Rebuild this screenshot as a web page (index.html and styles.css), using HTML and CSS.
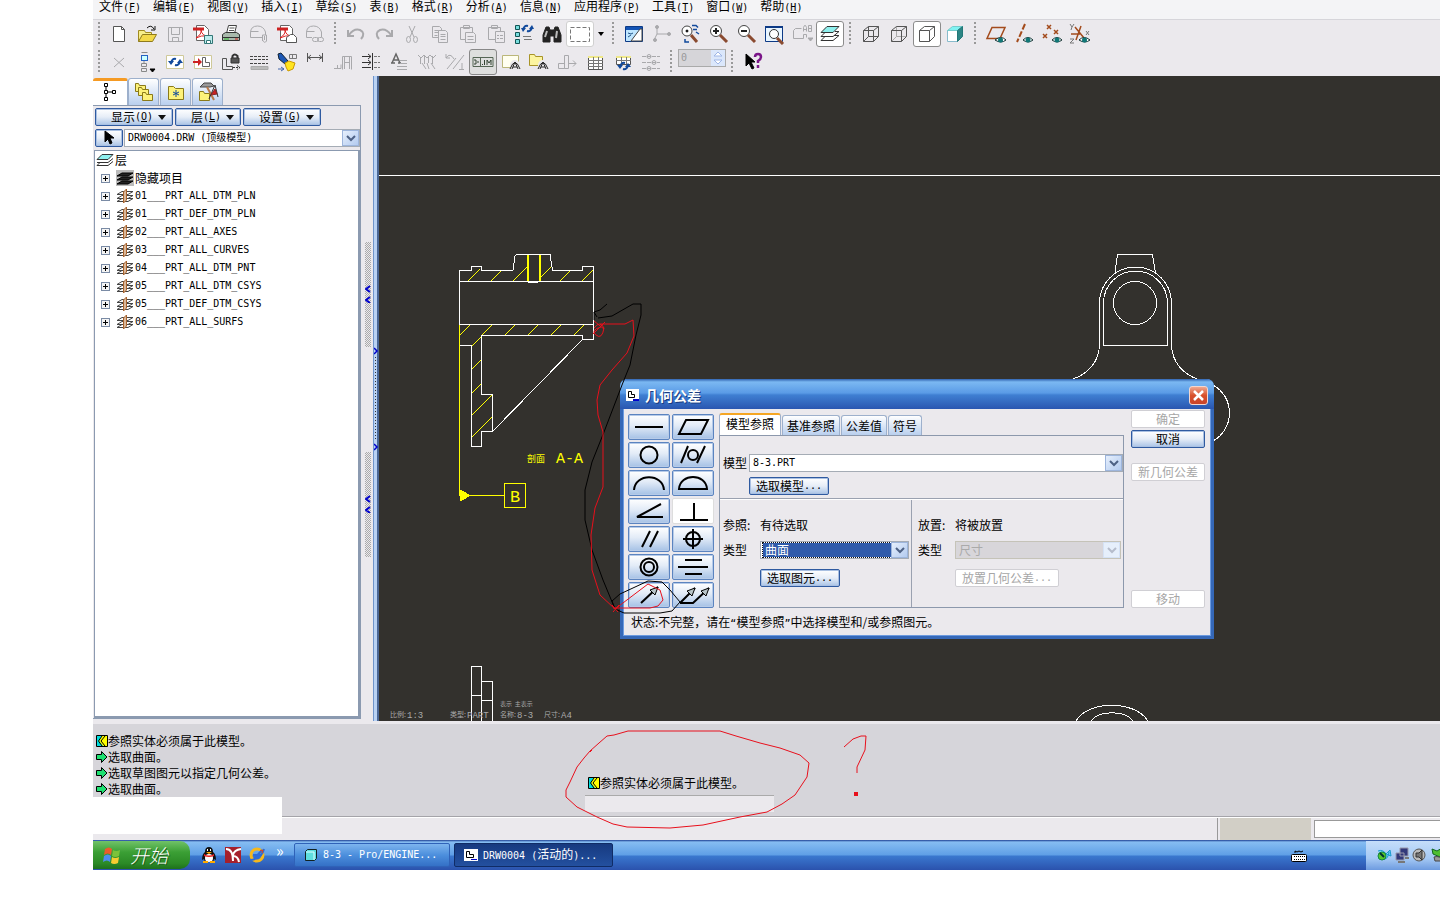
FILE: index.html
```html
<!DOCTYPE html>
<html lang="zh-CN">
<head>
<meta charset="utf-8">
<title>Pro/ENGINEER</title>
<link rel="stylesheet" href="styles.css">
</head>
<body>
<svg class="defs" aria-hidden="true">
<symbol id="layer" viewBox="0 0 18 16"><path d="M1 6.500l5-3h11l-5 3zM1 10.500l5-3h11l-5 3zM1 13.500l5-3h11l-5 3z" stroke="#444"/><path d="M7.500 15V4l3-3v11z" fill="#d8b79a" stroke="#a8622c"/></symbol>
<symbol id="chev" viewBox="0 0 10 8"><path d="M1 2l4 4 4-4" stroke-width="2"/></symbol>
<symbol id="warn" viewBox="0 0 12 12"><path d="M.5.500h11v11H.5z" fill="#ff0" stroke="#000"/><path d="M1 1h5L3 6l4 5H1z" fill="#0dd" stroke="none"/><path d="M9 1L5 6l4 5M6 1L2.500 6l3.500 5" stroke="#000"/></symbol>
<symbol id="go" viewBox="0 0 12 12"><path d="M.5 3.500h5v-3l5.500 5.500-5.500 5.500v-3h-5z" fill="#1ee070" stroke="#000"/></symbol>
</svg>
<div class="app">
<nav class="menubar">
<button>文件<span class="en">(<u>F</u>)</span></button><button>编辑<span class="en">(<u>E</u>)</span></button><button>视图<span class="en">(<u>V</u>)</span></button><button>插入<span class="en">(<u>I</u>)</span></button><button>草绘<span class="en">(<u>S</u>)</span></button><button>表<span class="en">(<u>B</u>)</span></button><button>格式<span class="en">(<u>R</u>)</span></button><button>分析<span class="en">(<u>A</u>)</span></button><button>信息<span class="en">(<u>N</u>)</span></button><button>应用程序<span class="en">(<u>P</u>)</span></button><button>工具<span class="en">(<u>T</u>)</span></button><button>窗口<span class="en">(<u>W</u>)</span></button><button>帮助<span class="en">(<u>H</u>)</span></button>
</nav>

<div class="toolbars">
<div class="toolbar">
<span class="sep first"></span>
<button class="tool" aria-label="新建"><svg viewBox="0 0 22 22"><path d="M5.500 3.500h8l3 3v12h-11z" fill="#fff" stroke="#555"/><path d="M13.500 3.500v3h3" stroke="#555"/></svg></button>
<button class="tool" aria-label="打开"><svg viewBox="0 0 22 22"><path d="M2.500 18.500v-11h6l1 2h6v2" fill="#f7ee8a" stroke="#a08a20"/><path d="M2.500 18.500l4-7h14l-4 7z" fill="#f3d94a" stroke="#8f7a1c"/><path d="M11 5q4-4 7 1m1-3v4h-4" stroke="#111"/></svg></button>
<button class="tool dim" aria-label="保存"><svg viewBox="0 0 22 22"><path d="M4.500 4.500h14v14h-14zM7.500 4.500v7h8v-7M8.500 18.500v-4h6v4"/></svg></button>
<button class="tool" aria-label="导出 PDF"><svg viewBox="0 0 22 22"><path d="M4.500 2.500h8l4 4v11h-12z" fill="#fff" stroke="#666"/><path d="M1 4.500h11v3H1z" fill="#c22" stroke="none"/><path d="M4 15q6-4 5-8q1 6 7 6q-7-1-12 2" stroke="#d22"/><path d="M12.500 12.500h8v8h-8z" fill="#bdecec" stroke="#377"/><path d="M14.500 17.500h4v3h-4z" fill="#fff" stroke="#377"/></svg></button>
<button class="tool" aria-label="打印"><svg viewBox="0 0 22 22"><path d="M6.500 10.500l2-8h8l-2 8" fill="#fff" stroke="#444"/><path d="M9.500 5h5M9 7.500h5" stroke="#555"/><path d="M2.500 11.500l3-2h11l3 2v6h-17z" fill="#a9b9ac" stroke="#333"/><path d="M3 14.500h16" stroke="#333"/><path d="M4 16h5" stroke="#3b3"/><path d="M15 16h3" stroke="#d22"/></svg></button>
<button class="tool dim" aria-label="发送"><svg viewBox="0 0 22 22"><path d="M14 14.500H2.500V10q0-7 7-7q6 0 8 6v3M2.500 8.500h8"/><path d="M14.500 18v-6h4v6q-2 3-4-1M16.500 13v4"/></svg></button>
<button class="tool" aria-label="邮寄 PDF"><svg viewBox="0 0 22 22"><path d="M4.500 2.500h9l3 3v12h-12z" fill="#fff" stroke="#666"/><path d="M1 4.500h11v3H1z" fill="#c22" stroke="none"/><path d="M4 15q6-4 5-8q1 6 7 6q-7-1-12 2" stroke="#d22"/><path d="M10.500 14.500l4-3h3l3 3v5h-10z" fill="#fff" stroke="#555"/></svg></button>
<button class="tool dim" aria-label="链接"><svg viewBox="0 0 22 22"><path d="M8 14.500H2.500V10q0-7 7-7q6 0 8 6v5M2.500 8.500h8"/><rect x="8.500" y="14.500" width="6" height="4" rx="2"/><rect x="13.500" y="14.500" width="6" height="4" rx="2"/></svg></button>
<span class="sep"></span>
<button class="tool dim" aria-label="撤销"><svg viewBox="0 0 22 22"><path d="M3 7v6h6M4 12q5-7 11-5q6 3 1 9" stroke-width="2"/></svg></button>
<button class="tool dim" aria-label="重做"><svg viewBox="0 0 22 22"><path d="M19 7v6h-6M18 12q-5-7-11-5q-6 3-1 9" stroke-width="2"/></svg></button>
<button class="tool dim" aria-label="剪切"><svg viewBox="0 0 22 22"><path d="M8 3l5 11M14 3L9 14"/><ellipse cx="7.500" cy="16.500" rx="2" ry="3"/><ellipse cx="14.500" cy="16.500" rx="2" ry="3"/></svg></button>
<button class="tool dim" aria-label="复制"><svg viewBox="0 0 22 22"><path d="M3.500 3.500h7l2 2v9h-9zM5.500 7.500h5M5.500 9.500h5M5.500 12.500h3"/><path d="M9.500 7.500h7l2 2v10h-9z" fill="#ebe9ed"/><path d="M11.500 11.500h5M11.500 13.500h5M11.500 16.500h5"/></svg></button>
<button class="tool dim" aria-label="粘贴"><svg viewBox="0 0 22 22"><path d="M3.500 4.500h12v12h-12zM6.500 2.500h6v3h-6z"/><path d="M8.500 9.500h8l2 2v8h-10z" fill="#ebe9ed"/><path d="M10.500 13.500h6M10.500 16.500h6"/></svg></button>
<button class="tool dim" aria-label="选择性粘贴"><svg viewBox="0 0 22 22"><path d="M3.500 4.500h12v12h-12zM6.500 2.500h6v3h-6z"/><path d="M10.500 8.500h9v11h-9z" fill="#ebe9ed"/><path d="M12 12.500h2m1 0h3M12 15.500h2m1 0h3"/></svg></button>
<button class="tool" aria-label="再生管理器"><svg viewBox="0 0 22 22"><path d="M2.500 2.500h4v4h-4zM2.500 9.500h4v4h-4zM2.500 16.500h4v4h-4z" fill="#7dd" stroke="#155"/><path d="M10 7q1-5 5-4M19 4q-1 5-5 4" stroke="#124a9c" stroke-width="2"/><path d="M8 5h5l-3 4zM21 6h-5l3-4z" fill="#124a9c" stroke="none"/><path d="M10 13.500h8M11 16.500h8" stroke="#777"/></svg></button>
<button class="tool" aria-label="查找"><svg viewBox="0 0 22 22"><path d="M5 4h3l1 3h4l1-3h3l3 8v7h-7v-6H9v6H2v-7z" fill="#222" stroke="#222"/><path d="M6 8l-2 6M16 8l-1 7" stroke="#bbb" stroke-width="2"/></svg></button>
<button class="tool framed" aria-label="选取框"><svg viewBox="0 0 22 22"><rect x="1.500" y="4.500" width="19" height="14" stroke="#777" stroke-dasharray="4 2"/></svg></button>
<button class="drop" aria-label="更多选项"><i></i></button>
<span class="sep"></span>
<button class="tool" aria-label="重画"><svg viewBox="0 0 22 22"><path d="M2.500 3.500h17v15h-17z" fill="#bfe6ff" stroke="#0d3a86"/><path d="M3 4h16v3H3z" fill="#1353b5" stroke="none"/><path d="M5 10l3 1 2-1M5 14l3-2" stroke="#258"/><path d="M17 6L8 18h11V6z" fill="#fff" stroke="#444"/></svg></button>
<button class="tool dim" aria-label="旋转中心"><svg viewBox="0 0 22 22"><path d="M6 4v7h12M6 11l-3 6"/><g fill="currentColor"><circle cx="6" cy="4" r="1.500"/><circle cx="18" cy="11" r="1.500"/><circle cx="4" cy="17" r="1.500"/></g></svg></button>
<button class="tool" aria-label="定向模式"><svg viewBox="0 0 22 22"><circle cx="8" cy="8" r="5" fill="#fff" stroke="#444"/><path d="M12 12l6 7" stroke="#8a4a30" stroke-width="3"/><circle cx="8" cy="8" r="1" fill="#333"/><path d="M13 2.500h4l2 2M14 6.500h4M6 16v3h4M17 9l3 2" stroke="#124a9c" stroke-width="1.500"/></svg></button>
<button class="tool" aria-label="放大"><svg viewBox="0 0 22 22"><circle cx="9" cy="8" r="5.500" fill="#fff" stroke="#444"/><path d="M13 12l7 7" stroke="#8a4a30" stroke-width="3"/><path d="M9 5v6M6 8h6" stroke="#222" stroke-width="2"/></svg></button>
<button class="tool" aria-label="缩小"><svg viewBox="0 0 22 22"><circle cx="9" cy="8" r="5.500" fill="#fff" stroke="#444"/><path d="M13 12l7 7" stroke="#8a4a30" stroke-width="3"/><path d="M6 8h6" stroke="#222" stroke-width="2"/></svg></button>
<button class="tool" aria-label="重新调整"><svg viewBox="0 0 22 22"><path d="M2.500 3.500h17v15h-17z" fill="#e8f5ff" stroke="#0d3a86"/><path d="M2 3h18v2H2z" fill="#0d3a86" stroke="none"/><circle cx="11" cy="11" r="4.500" fill="#fff" stroke="#333"/><path d="M14 15l6 6" stroke="#8a4a30" stroke-width="3"/></svg></button>
<button class="tool dim" aria-label="已保存视图"><svg viewBox="0 0 22 22"><path d="M2.500 15.500v-8l2-2h6M2.500 15.500h10v-4h3v3M12.500 8.500v-4l1-2h1l1 2v4m-3-2h3M17.500 2.500h3v6h-3zm0 3h3"/><path d="M17 15h5l-2.500 3z" fill="currentColor"/></svg></button>
<button class="tool framed on" aria-label="层"><svg viewBox="0 0 22 22"><path d="M2 17.500h12l6-5h-5M2 17.500l4-4M2 13.500h12l6-5h-4M2 13.500l4-4" stroke="#333"/><path d="M2 9.500l6-6h12l-6 6z" fill="#8ff0ee" stroke="#333"/></svg></button>
<span class="sep"></span>
<button class="tool" aria-label="线框"><svg viewBox="0 0 22 22"><path d="M3.500 7.500h10v11h-10zM8.500 3.500h10v10h-10zM3.500 7.500l5-4M13.500 7.500l5-4M13.500 18.500l5-5M3.500 18.500l5-5" stroke="#555"/></svg></button>
<button class="tool" aria-label="隐藏线"><svg viewBox="0 0 22 22"><path d="M8.500 3.500v10h10M3.500 18.500l5-5" stroke="#aaa"/><path d="M3.500 7.500h10v11h-10zM3.500 7.500l5-4h10v10l-5 5M13.500 7.500l5-4" stroke="#555"/></svg></button>
<button class="tool framed on" aria-label="无隐藏线"><svg viewBox="0 0 22 22"><path d="M3.500 7.500h10v11h-10zM3.500 7.500l5-4h10v10l-5 5M13.500 7.500l5-4" stroke="#555"/></svg></button>
<button class="tool" aria-label="着色"><svg viewBox="0 0 22 22"><path d="M3.500 7.500h10v11h-10z" fill="#fff" stroke="#8bc"/><path d="M3.500 7.500l5-4h10l-5 4z" fill="#7ff2f2" stroke="#7cc"/><path d="M13.500 7.500l5-4v10l-5 5z" fill="#2c8585" stroke="#277"/></svg></button>
<span class="sep"></span>
<button class="tool" aria-label="基准平面"><svg viewBox="0 0 22 22"><path d="M7 4.500h13l-5 11H2z" stroke="#a34b1c" stroke-width="1.500"/><path d="M10 17q6-5 11 0q-5 4-11 0z" fill="#fff" stroke="#133"/><circle cx="15.500" cy="17" r="2.500" fill="#177" stroke="none"/></svg></button>
<button class="tool" aria-label="基准轴"><svg viewBox="0 0 22 22"><path d="M12 1L4 19" stroke="#a34b1c" stroke-width="2" stroke-dasharray="6 2"/><path d="M10 17q5-5 10 0q-5 4-10 0z" fill="#fff" stroke="#133"/><circle cx="15" cy="17" r="2.500" fill="#177" stroke="none"/></svg></button>
<button class="tool" aria-label="基准点"><svg viewBox="0 0 22 22"><path d="M6 2l4 4m0-4L6 6M2 11l4 4m0-4l-4 4M13 7l4 4m0-4l-4 4" stroke="#a34b1c" stroke-width="1.500"/><path d="M11 17q5-5 10 0q-5 4-10 0z" fill="#fff" stroke="#133"/><circle cx="16" cy="17" r="2.500" fill="#177" stroke="none"/></svg></button>
<button class="tool" aria-label="坐标系"><svg viewBox="0 0 22 22"><path d="M2 11h9M12 3L7 17M6 4l9 11" stroke="#a34b1c" stroke-width="1.500"/><path d="M1 1l2 3 2-3M3 4l-1 3M1 16h4l-4 4h4M17 8l3 4m0-4l-3 4" stroke="#777"/><path d="M10 17q5-5 11 0q-5 4-11 0z" fill="#fff" stroke="#133"/><circle cx="15.500" cy="17" r="2.500" fill="#177" stroke="none"/></svg></button>
</div>
<div class="toolbar">
<span class="sep first"></span>
<button class="tool dim" aria-label="删除"><svg viewBox="0 0 22 22"><path d="M6 7l10 9M16 7L6 16"/></svg></button>
<button class="tool" aria-label="视图列表"><svg viewBox="0 0 22 22"><path d="M5.500 1.500h6M5.500 12.500h5v3h-5zM5.500 17.500h5v3h-5zM8 10v2" stroke="#888"/><rect x="5.500" y="4.500" width="6" height="5" fill="#cff" stroke="#2563c4"/><path d="M14 18h5l-2.500 3z" fill="#000"/></svg></button>
<button class="tool" aria-label="更新"><svg viewBox="0 0 22 22"><path d="M2.500 4.500h17v13h-17z" fill="#fff" stroke="#cfc99a"/><path d="M7 12q1-5 5-4M16 10q-1 5-5 4" stroke="#124a9c" stroke-width="2"/><path d="M4 10h6l-3 4zM19 12h-6l3-4z" fill="#124a9c" stroke="none"/></svg></button>
<button class="tool" aria-label="插入视图"><svg viewBox="0 0 22 22"><path d="M2.500 4.500h17v13h-17z" fill="#fff" stroke="#cfc99a"/><path d="M1 11h6" stroke="#c22" stroke-width="2"/><path d="M6 7l4 4-4 4z" stroke="none" fill="#c22"/><path d="M10.500 6.500h3v5h4v4h-7z" stroke="#666"/></svg></button>
<button class="tool" aria-label="锁定视图"><svg viewBox="0 0 22 22"><path d="M2.500 7.500h4v8h6v3h-10z" stroke="#555"/><path d="M12.500 7v-2q2-3 5 0v2" stroke="#333" stroke-width="2"/><path d="M11 7h8v5h-8z" fill="#555" stroke="#333"/><path d="M13 16.500h7m-3-2l3 2-3 2" stroke="#333" stroke-dasharray="2 1"/></svg></button>
<button class="tool" aria-label="线型"><svg viewBox="0 0 22 22"><path d="M2 5.500h18M2 8.500h18M2 12.500h18" stroke="#444" stroke-dasharray="3 1"/><path d="M3 15.500h17v3H3z" fill="#bbb" stroke="#aaa"/></svg></button>
<button class="tool" aria-label="显示和拭除"><svg viewBox="0 0 22 22"><path d="M2 3l3-1 7 8-3 3-6-5z" fill="#1c57b5" stroke="#123"/><path d="M9 12l4-2 6 2-2 6-5 2-2-4z" fill="#ffe420" stroke="#c90"/><path d="M13.500 3.500h7v4h-7zm3 0v4" stroke="#777"/><path d="M2 18h6m-3-2l3 2-3 2" stroke="#46a"/></svg></button>
<button class="tool" aria-label="尺寸"><svg viewBox="0 0 22 22"><path d="M3.500 2v9M18.500 2v9M4 6.500h14M7 4L4 6.500l3 2M15 4l3 2.500-3 2" stroke="#555"/></svg></button>
<button class="tool dim" aria-label="纵坐标尺寸"><svg viewBox="0 0 22 22"><path d="M2 17.500h7v-4M10.500 18.500v-13h9v13M12.500 5v13M17.500 5v13M12.500 11.500h5M5.500 14v4"/></svg></button>
<button class="tool" aria-label="对齐尺寸"><svg viewBox="0 0 22 22"><path d="M2 5.500h9M2 11.500h9M2 16.500h9M8 3l3 2.500L8 8M8 9l3 2.500L8 14M12.500 2v17" stroke="#333"/><path d="M14 5.500h6M14 11.500h6M14 16.500h6" stroke="#777" stroke-dasharray="3 1"/></svg></button>
<button class="tool dim" aria-label="文本样式"><svg viewBox="0 0 22 22"><path d="M4 12l4-9 4 9M5 9h6M3 12h4M10 12h3" stroke="#666" stroke-width="1.500"/><path d="M12 9.500h7M12 12.500h7M9 15.500h10M9 18.500h10"/></svg></button>
<button class="tool dim" aria-label="清除尺寸"><svg viewBox="0 0 22 22"><path d="M2 4l3 3 3-3 3 3 3-3 3 3 3-3M4.500 7v6M8.500 5v8M12.500 5v7M16.500 5v8M6 12l4 6M11 12l2 6M15 12l4 6"/></svg></button>
<button class="tool dim" aria-label="公差"><svg viewBox="0 0 22 22"><path d="M2 7q4-6 8 1M2 3v4h4M3 18L12 7M9 18L20 4M18 12v7M15 18.500h5"/></svg></button>
<button class="tool framed pressed" aria-label="几何公差"><svg viewBox="0 0 22 22"><path d="M1 6.500h20v9H1zM8.500 6v10" stroke="#565"/><path d="M2 9h2v4H2m3-2h2M10.500 13v1M12.500 14V9M15 14V9l2 3 2-3v5" stroke="#343"/></svg></button>
<button class="tool" aria-label="符号"><svg viewBox="0 0 22 22"><path d="M2.500 4.500h16v12h-16z" fill="#fffff0" stroke="#bbb77a"/><circle cx="15" cy="14" r="5" fill="#ebe9ed" stroke="none"/><path d="M10 18q5-13 10 0M12 18l3-7 3 7M13 16h4" stroke="#222"/></svg></button>
<button class="tool" aria-label="符号库"><svg viewBox="0 0 22 22"><path d="M1.500 14.500v-11h5l1 2h7v9z" fill="#fcf5a0" stroke="#a89428"/><circle cx="15" cy="14" r="5" fill="#ebe9ed" stroke="none"/><path d="M10 18q5-13 10 0M12 18l3-7 3 7M13 16h4" stroke="#222"/></svg></button>
<button class="tool dim" aria-label="移动特殊"><svg viewBox="0 0 22 22"><path d="M2.500 12.500h6v5h-6zM8.500 4.500h4v13h-4zM12 12.500h8m-3-3l3 3-3 3"/></svg></button>
<button class="tool" aria-label="表"><svg viewBox="0 0 22 22"><path d="M4.500 5.500h14v13h-14z" fill="#fff" stroke="#555"/><path d="M4 5h15v2H4z" fill="#efe88a" stroke="none"/><path d="M4 9.500h15M4 12.500h15M4 15.500h15M9.500 6v12M14.500 6v12" stroke="#777"/></svg></button>
<button class="tool" aria-label="更新表"><svg viewBox="0 0 22 22"><path d="M4.500 5.500h14v8h-14z" fill="#fff" stroke="#555"/><path d="M4 5h15v2H4z" fill="#efe88a" stroke="none"/><path d="M4 9.500h15M9.500 6v7M14.500 6v7" stroke="#777"/><path d="M8 16q1-5 5-4M16 14q-1 5-5 4" stroke="#124a9c" stroke-width="2"/><path d="M5 14h6l-3 4zM19 16h-6l3-4z" fill="#124a9c" stroke="none"/></svg></button>
<button class="tool dim" aria-label="球标"><svg viewBox="0 0 22 22"><path d="M2 5.500h18M2 11.500h18M2 17.500h18" stroke-dasharray="4 1"/><circle cx="9" cy="5.500" r="2"/><circle cx="14" cy="11.500" r="2"/><circle cx="9" cy="17.500" r="2"/></svg></button>
<span class="sep"></span>
<div class="spinner"><input class="en" aria-label="页面" value="0" disabled><svg viewBox="0 0 14 16"><path d="M3 6l4-4 4 4zM3 10l4 4 4-4z" fill="#fff" stroke="#9fb6e6"/></svg></div>
<span class="sep"></span>
<button class="tool" aria-label="上下文帮助"><svg viewBox="0 0 22 22"><path d="M4 3v12l3-3 3 6 2-1-3-6h4z" fill="#000" stroke="#000"/><path d="M13 6q0-3 3-3t3 3q0 2-3 4v2M16 14v3" stroke="#7a1588" stroke-width="2.500"/></svg></button>
</div>
</div>

<main class="work">
<aside class="side">
<div class="tabs">
<button class="tab active" aria-label="模型树"><svg viewBox="0 0 22 22"><path d="M5.500 1.500h3v3h-3zM5.500 8.500h3v3h-3zM5.500 15.500h3v3h-3zM13.500 8.500h3v3h-3zM7 5v3M7 12v3M9 10h4" stroke="#000"/></svg></button>
<button class="tab" aria-label="文件夹浏览器"><svg viewBox="0 0 22 22"><g fill="#fdf27a" stroke="#8a7a1a"><path d="M2.500 10.500v-8h3l1 2h6v6z"/><path d="M5.500 14.500v-8h3l1 2h6v6z"/><path d="M9.500 19.500v-8h3l1 2h6v6z"/></g></svg></button>
<button class="tab" aria-label="收藏夹"><svg viewBox="0 0 22 22"><path d="M3.500 18.500v-13h5l2 2h8v11z" fill="#fdf27a" stroke="#8a7a1a"/><path d="M11 9v7M8 11l6 3M14 11l-6 3" stroke="#124a9c"/></svg></button>
<button class="tab" aria-label="工具"><svg viewBox="0 0 22 22"><path d="M3 6l4-4h7l3 3-4 1H6z" fill="#999" stroke="#444"/><path d="M10 6l7 13" stroke="#b97a4a" stroke-width="2"/><path d="M2.500 19.500v-9h4l1 2h5v7z" fill="#fdf27a" stroke="#8a7a1a"/><path d="M18 4l3 12M18 4l-6 14" stroke="#333"/><path d="M14 14l4-6 2 5z" fill="#c22" stroke="#822"/></svg></button>
</div>
<div class="panel">
<div class="bar"><button class="btn">显示<span class="en">(<u>O</u>)</span><i></i></button><button class="btn short">层<span class="en">(<u>L</u>)</span><i></i></button><button class="btn">设置<span class="en">(<u>G</u>)</span><i></i></button></div>
<div class="bar pick"><button class="btn cursor" aria-label="选取"><svg viewBox="0 0 14 16"><path d="M3 1v11l3-3 2 5 2-1-2-5h4z" fill="#000" stroke="#000"/></svg></button>
<div class="combo"><select aria-label="活动模型" class="en"><option>DRW0004.DRW (顶级模型)</option></select><span class="chev"><svg><use href="#chev"/></svg></span></div></div>
<ul class="tree">
<li class="root"><svg class="lay" viewBox="0 0 18 16"><path d="M1 13.500h11l5-4M1 10.500h11l5-4M1 13.500l3-3" stroke="#333"/><path d="M1 7.500l5-5h11l-5 5z" fill="#8ff0ee" stroke="#333"/></svg>层</li>
<li><button class="plus" aria-label="展开"></button><svg class="lay dark" viewBox="0 0 18 16"><path d="M1 6l5-3h11l-5 3zM1 10l5-3h11l-5 3zM1 14l5-3h11l-5 3z" fill="#222" stroke="#000"/></svg>隐藏项目</li>
<li><button class="plus" aria-label="展开"></button><svg class="lay"><use href="#layer"/></svg><span class="en">01___PRT_ALL_DTM_PLN</span></li>
<li><button class="plus" aria-label="展开"></button><svg class="lay"><use href="#layer"/></svg><span class="en">01___PRT_DEF_DTM_PLN</span></li>
<li><button class="plus" aria-label="展开"></button><svg class="lay"><use href="#layer"/></svg><span class="en">02___PRT_ALL_AXES</span></li>
<li><button class="plus" aria-label="展开"></button><svg class="lay"><use href="#layer"/></svg><span class="en">03___PRT_ALL_CURVES</span></li>
<li><button class="plus" aria-label="展开"></button><svg class="lay"><use href="#layer"/></svg><span class="en">04___PRT_ALL_DTM_PNT</span></li>
<li><button class="plus" aria-label="展开"></button><svg class="lay"><use href="#layer"/></svg><span class="en">05___PRT_ALL_DTM_CSYS</span></li>
<li><button class="plus" aria-label="展开"></button><svg class="lay"><use href="#layer"/></svg><span class="en">05___PRT_DEF_DTM_CSYS</span></li>
<li><button class="plus" aria-label="展开"></button><svg class="lay"><use href="#layer"/></svg><span class="en">06___PRT_ALL_SURFS</span></li>
</ul>
</div>
</aside>
<div class="grip">
<div class="hatch"><svg viewBox="0 0 6 18"><path d="M5 1L1 4l4 3M5 12l-4 3 4 3"/></svg></div>
<div class="hatch"><svg viewBox="0 0 6 18"><path d="M5 1L1 4l4 3M5 12l-4 3 4 3"/></svg></div>
</div>
<div class="sash"><svg viewBox="0 0 6 104"><path d="M0 1l3 3-3 3M0 97l3 3-3 3" stroke="#00c" stroke-width="1.500"/><path d="M1.500 10v84" stroke="#333" stroke-dasharray="1 2"/></svg></div>

<section class="canvas">
<svg class="drawing" viewBox="379 76 1061 645" preserveAspectRatio="xMinYMin meet">
<g stroke="#ff0" shape-rendering="crispEdges">
<path d="M527.500 254V281M539.500 254V281" stroke-width="2"/>
<path d="M468 281l12-12M491 281l10-10M513 281l14-14M541 277l10-10M560 281l10-10M582 281l11-11M460 335l11-11M482 335l11-11M505 335l11-11M528 335l11-11M551 335l11-11M574 335l11-11M472 346l10-10M472 369l9-9M472 393l9-9M472 415l20-20M472 437l20-20"/>
<path d="M504.500 483.500h21v24h-21z"/>
</g>
<g stroke="#fff" shape-rendering="crispEdges">
<path d="M379 175.500H1440"/>
<path d="M459.500 324.500V270.500H471.500V266.500H481.500V270.500H513L515 256 517 254.500H550L552.500 270.500H582.500V266.500H593.500V339.500H582.500V335.500H481.500V394.500H492.500V431.500H481.500V446.500H471.500V345.500H460M459 281.500H593M459 324.500H593M582.500 339.500L492.500 431.500M527 281.500l2 1h8l2-1"/>
<path d="M1115 273L1117.500 254.500H1152.500L1155.500 273"/>
<path d="M1073 379C1087 374 1099 363 1099.500 345V303A36 36 0 0 1 1171.500 303V345C1172 363 1184 374 1197 379"/>
<path d="M1103.500 345.500V303A32 32 0 0 1 1167.500 303V345.500Z"/>
<circle cx="1135" cy="303" r="21.500"/>
<path d="M1213 385A32 32 0 0 1 1213 441"/>
<path d="M471.500 721V666.500H481.500V721M481.500 681.500H492.500V721M471 695.500H481M481 700.500H492"/>
<path d="M1076 721C1088 700 1135 700 1148 721M1091 721C1099 710 1125 710 1133 721"/>
</g>
<g stroke="#ff0" shape-rendering="crispEdges">
<path d="M459.500 325V495.500H504"/>
<path d="M460 490l10 5.500-10 5.500z" fill="#ff0"/>
</g>
<g class="dwg-text"><text x="527" y="462">剖面</text><text class="big" x="556" y="463">A-A</text><text class="tall" x="510" y="502">B</text></g>
<g class="dwg-note"><text x="390" y="717">比例:</text><text class="num" x="407" y="718">1:3</text><text x="450" y="717">类型:</text><text class="num" x="467" y="718">PART</text><text class="tiny" x="500" y="706">表示  主表示</text><text x="500" y="717">名称:</text><text class="num" x="517" y="718">8-3</text><text x="544" y="717">尺寸:</text><text class="num" x="561" y="718">A4</text></g>
</svg>

<section class="dialog" role="dialog" aria-label="几何公差">
<header><svg viewBox="0 0 16 14"><path d="M1 1h13v12H1z" fill="#fff" stroke="none"/><path d="M3.500 3.500v6h6v-3h-3v-3z" stroke="#000"/><path d="M8 12h6" stroke="#00c" stroke-width="2"/></svg><h1>几何公差</h1><button class="close" aria-label="关闭"><svg viewBox="0 0 17 17"><path d="M4 4l9 9M13 4l-9 9" stroke="#fff" stroke-width="2.500"/></svg></button></header>
<div class="body">
<div class="symbols">
<button aria-label="直线度"><svg viewBox="0 0 36 22"><path d="M4 11h28"/></svg></button>
<button aria-label="平面度"><svg viewBox="0 0 36 22"><path d="M11 4h22l-7 14H4z"/></svg></button>
<button aria-label="圆度"><svg viewBox="0 0 36 22"><circle cx="18" cy="11" r="8.500"/></svg></button>
<button aria-label="圆柱度"><svg viewBox="0 0 36 22"><circle cx="18" cy="11" r="5"/><path d="M6 19l7-17M22 19l8-17"/></svg></button>
<button aria-label="线轮廓"><svg viewBox="0 0 36 22"><path d="M3 18C4 1 32 1 33 18"/></svg></button>
<button aria-label="曲面轮廓"><svg viewBox="0 0 36 22"><path d="M4 17C5 1 31 1 32 17z"/></svg></button>
<button aria-label="倾斜度"><svg viewBox="0 0 36 22"><path d="M30 4L6 17h26"/></svg></button>
<button class="sel" aria-label="垂直度"><svg viewBox="0 0 36 22"><path d="M19 3v17M5 20h28"/></svg></button>
<button aria-label="平行度"><svg viewBox="0 0 36 22"><path d="M11 19l8-16M19 19l8-16"/></svg></button>
<button aria-label="位置度"><svg viewBox="0 0 36 22"><circle cx="18" cy="11" r="7"/><path d="M8 11h20M18 1v20"/></svg></button>
<button aria-label="同轴度"><svg viewBox="0 0 36 22"><circle cx="18" cy="11" r="8.500"/><circle cx="18" cy="11" r="5"/></svg></button>
<button aria-label="对称度"><svg viewBox="0 0 36 22"><path d="M10 4h17M3 11h30M10 18h17"/></svg></button>
<button aria-label="圆跳动"><svg viewBox="0 0 36 22"><path d="M10 19L27 3"/><path d="M27 3l-8 3 5 5z" fill="#b8c4c8" stroke-width="1"/></svg></button>
<button aria-label="总跳动"><svg viewBox="0 0 36 22"><path d="M5 19L20 4M34 4L18 19H5"/><path d="M20 4l-8 3 5 5zM34 4l-8 3 5 5z" fill="#b8c4c8" stroke-width="1"/></svg></button>
</div>
<div class="notebook">
<div class="dtabs"><button class="active">模型参照</button><button>基准参照</button><button>公差值</button><button>符号</button></div>
<div class="page">
<div class="model"><label for="model">模型</label><div class="combo"><input id="model" class="en" value="8-3.PRT"><span class="chev"><svg><use href="#chev"/></svg></span></div><button class="btn">选取模型<span class="en">...</span></button></div>
<div class="halves">
<div class="half left"><span>参照:</span><span>有待选取</span><label for="rtype">类型</label><div class="combo blue"><select id="rtype"><option>曲面</option></select><span class="chev"><svg><use href="#chev"/></svg></span></div><button class="btn">选取图元<span class="en">...</span></button></div>
<div class="half"><span>放置:</span><span>将被放置</span><label for="ptype">类型</label><div class="combo off"><select id="ptype" disabled><option>尺寸</option></select><span class="chev"><svg><use href="#chev"/></svg></span></div><button class="btn wide" disabled>放置几何公差<span class="en">...</span></button></div>
</div>
</div>
</div>
<div class="actions"><button class="btn" disabled>确定</button><button class="btn">取消</button><button class="btn new" disabled>新几何公差</button><button class="btn last" disabled>移动</button></div>
</div>
<footer>状态:不完整，请在<span class="en">“</span>模型参照<span class="en">”</span>中选择模型和/或参照图元。</footer>
</section>
</section>
</main>

<section class="messages">
<ul>
<li><svg><use href="#warn"/></svg>参照实体必须属于此模型。</li>
<li><svg><use href="#go"/></svg>选取曲面。</li>
<li><svg><use href="#go"/></svg>选取草图图元以指定几何公差。</li>
<li><svg><use href="#go"/></svg>选取曲面。</li>
</ul>
<div class="blank"></div>
<div class="copy"><p><svg><use href="#warn"/></svg>参照实体必须属于此模型。</p><div></div></div>
</section>
<div class="status"><span class="cell"></span><span class="field"></span></div>

<footer class="taskbar">
<button class="start"><svg viewBox="0 0 20 18"><g stroke="none"><path d="M3 3q4-3 7 0L9 9q-3-3-7 0z" fill="#ee5a2c"/><path d="M11 4q3 2 7 0l-1 6q-4 2-7 0z" fill="#7cc23a"/><path d="M2 10q4-3 7 0l-1 6q-3-3-7 0z" fill="#4f8df0"/><path d="M10 11q3 2 7 0l-1 6q-4 2-7 0z" fill="#f8cc30"/></g></svg>开始</button>
<div class="quick">
<button aria-label="QQ"><svg viewBox="0 0 18 18"><g stroke="none"><path d="M2 14q0-6 3-8q0-5 4-5t4 5q3 2 3 8l-2-1-1 3H5l-1-3z" fill="#111"/><ellipse cx="9" cy="12" rx="4" ry="4" fill="#fff"/><path d="M7 3h1v2H7zM10 3h1v2h-1z" fill="#fff"/><path d="M6 6h6l-3 2z" fill="#fa0"/><path d="M4 8q5 3 10 0v2q-5 2-10 0z" fill="#e22"/><path d="M3 15h5v2H3zM10 15h5v2h-5z" fill="#fa0"/></g></svg></button>
<button aria-label="词典"><svg viewBox="0 0 18 18"><path d="M1 1h16v16H1z" fill="#a5202c" stroke="none"/><path d="M2 3q7 0 7 12M9 9q1-5 8-6M9 10q5 0 6 6" stroke="#fff" stroke-width="2"/></svg></button>
<button aria-label="浏览器"><svg viewBox="0 0 18 18"><circle cx="9" cy="9" r="6" stroke="#f6b81c" stroke-width="3"/><path d="M3 14Q14 12 16 3M5 9h9M14 4L6 13" stroke="#2d6cd8" stroke-width="2"/><path d="M12 5l3-1-1 3" stroke="#d42"/></svg></button>
<span class="more">»</span>
</div>
<button class="task"><svg viewBox="0 0 14 14"><path d="M1.500 3.500l2-2h9v9l-2 2h-9z" fill="#5edede" stroke="#122"/><path d="M2 4h8v8" stroke="#dff"/></svg><span class="en">8-3 - Pro/ENGINE...</span></button>
<button class="task current"><svg viewBox="0 0 16 14"><path d="M1 1h14v12H1z" fill="#fff" stroke="none"/><path d="M3.500 3.500v6h7v-3h-4v-3z" stroke="#000"/><path d="M8 11.500h6" stroke="#00c"/></svg><span class="en">DRW0004 (<b>活动的</b>)...</span></button>
<button class="kbd" aria-label="输入法"><svg viewBox="0 0 18 14"><path d="M5 4V2l2 1 2-1 2 1 2-1" stroke="#000"/><rect x="1.500" y="5.500" width="15" height="7" rx="1" fill="#fff" stroke="#000"/><path d="M4 7.500h11M4 10.500h11" stroke="#000" stroke-dasharray="1 1"/></svg></button>
<div class="tray">
<svg viewBox="0 0 16 16"><path d="M2 4q5-2 8 3M5 12q7 2 8-7M10 7l4-4 1 6z" fill="#6bd1f5" stroke="#189ace"/><circle cx="6" cy="9" r="4" fill="#57c72b" stroke="#184"/><path d="M4 6l4 4" stroke="#033" stroke-width="2"/></svg>
<svg viewBox="0 0 16 16"><path d="M6 1h8v8H6zM2 6h8v7H2z" fill="#32397a" stroke="#99a"/><path d="M4 15h7M11 11h4" stroke="#777" stroke-width="2"/></svg>
<svg viewBox="0 0 16 16"><circle cx="7" cy="8" r="6" fill="#bbb" stroke="#555"/><path d="M4 6h3l3-3v10L7 10H4z" fill="#777" stroke="#333"/></svg>
<svg viewBox="0 0 16 16"><path d="M2 2l5 2 5-3 3 4-5 5-7-3z" fill="#4fbf32" stroke="#162"/><path d="M4 10q6-2 9 4H5z" fill="#999" stroke="#444"/></svg>
</div>
</footer>
</div>
<svg class="ink" viewBox="0 0 1440 900" preserveAspectRatio="xMinYMin meet">
<path class="black" d="M607 304l-7 6-6 2v8M594 312l3 5M598 318L612 316 633 304 641 304 641 315 636 335 630 365 622 385 604 432 592 462 585 490V520L592 550 603 580 615 609M612 601L620 594 648 581 662 582 670 590 680 602 672 611 660 613H624L615 609 612 601"/>
<path class="red" d="M594 321l10 8M605 322l-12 12M594 328q6-8 10 0q-2 12-8 7t5-8M600 324H625L633 320 634 336 627 353 612 370 600 385 597 400 598 415 603 432V487L595 508 591 535 592 570 600 595 615 609 648 584 660 590 663 600 658 606 650 608H613M612 605l6 7M619 605l-6 7"/>
<path class="red" d="M590 752l2-2M590 751L599 743 607 736 614 735 628 731H720L736 736 760 743 780 748 800 755 809 763 807 777 795 795 782 804 767 812 740 817 703 825 670 828 627 827 613 824 597 817 577 807 566 797 566 790 570 782 577 767 584 758 590 751M844 747L853 739 861 736H866L865 750 857 767V773"/>
<path class="dot" d="M854 792h4v4h-4z"/>
</svg>
</body>
</html>
```
FILE: styles.css
```css
* { box-sizing: border-box; }
body {
  margin: 0;
  padding-left: 93px;
  background: #fff;
  color: #000;
  font: 12px/16px "Noto Sans CJK SC", sans-serif;
  overflow: hidden;
}
button, input, select { font: inherit; color: inherit; margin: 0; padding: 0; border: 0; background: none; border-radius: 0; }
select { appearance: none; }
button { white-space: nowrap; }
svg { fill: none; stroke: currentColor; display: block; flex: none; }
ul, p, h1 { margin: 0; padding: 0; list-style: none; }
.defs { position: absolute; width: 0; height: 0; }
.en { font-family: "DejaVu Sans Mono", "Noto Sans CJK SC", monospace; font-size: 10px; }

.app { display: flex; flex-direction: column; height: calc(100vh - 30px); min-height: 600px; }
.menubar { display: flex; gap: 12px; height: 19px; padding-left: 6px; flex: none; background: #f4f4f6; align-items: flex-start; }
.menubar button { line-height: 12px; height: 12px; }
.toolbars { flex: none; background: #ebe9ed; border-top: 1px solid #d6d5da; }
.toolbar { display: flex; align-items: center; height: 28px; }
.sep { width: 13px; height: 24px; flex: none; border-left: 5px solid transparent; background: repeating-linear-gradient(#999 0 2px, transparent 2px 4px) padding-box 0 0 / 2px 100% no-repeat; }
.sep.first { width: 12px; }
.tool { width: 28px; height: 26px; flex: none; display: flex; align-items: center; justify-content: center; border-radius: 3px; }
.tool svg { width: 22px; height: 22px; }
.tool.dim { color: #a9a9ac; }
.tool.framed { background: #fff; border: 1px solid #d0d0d0; }
.tool.on { border: 1px solid #8c8c8c; }
.tool.pressed { background: #dedfde; border: 1px solid #888; }
.drop { width: 13px; display: flex; justify-content: center; }
.drop i { border: 3px solid transparent; border-top: 4px solid #000; border-bottom: 0; }
.spinner { display: flex; width: 48px; height: 18px; margin-bottom: 8px; background: #d6d5d9; border: 1px solid #aaa; align-items: center; }
.spinner input { width: 32px; padding-left: 2px; color: #999; }
.spinner svg { width: 14px; height: 16px; background: #dbe7fb; }

.work { display: flex; flex: 1; min-height: 0; }
.side { width: 268px; flex: none; display: flex; flex-direction: column; background: #ebe9ed; padding-top: 2px; }
.tabs { display: flex; height: 27px; flex: none; }
.tab { width: 31px; margin-right: 1px; display: flex; align-items: center; justify-content: center; background: linear-gradient(#fff, #b9cfee); border: 1px solid #9db0cc; border-bottom: 0; border-radius: 3px 3px 0 0; }
.tab svg { width: 22px; height: 22px; }
.tab.active { width: 35px; margin: 0; background: #fff; border-top: 3px solid #f59a23; border-left: 0; }
.panel { flex: 1; min-height: 0; display: flex; flex-direction: column; gap: 2px; border: 1px solid #8b9ab0; border-left-width: 0; padding: 2px 0 0 1px; margin-bottom: 2px; }
.bar { display: flex; gap: 2px; height: 19px; padding-left: 1px; }
.bar .btn { width: 78px; padding-left: 9px; }
.bar .short { width: 66px; }
.bar.pick { gap: 1px; }
.btn { height: 18px; display: flex; align-items: center; justify-content: center; color: #000; border: 1px solid #2f5aa0; border-radius: 2px; background: linear-gradient(#fff, #e6edf7 50%, #a9c3e6); box-shadow: inset 0 0 0 1px #a9c0e2; line-height: 14px; }
.btn:disabled { color: #a6a6a6; border-color: #d0cfd4; background: #fff; box-shadow: none; }
.btn i { border: 4px solid transparent; border-top: 5px solid #111; border-bottom: 0; margin-left: 5px; }
.bar .btn.cursor { width: 28px; padding-left: 0; }
.cursor svg { width: 14px; height: 16px; }
.combo { display: flex; height: 18px; flex: 1; min-width: 0; background: #fff; border: 1px solid #a5acb5; align-items: center; }
.combo select, .combo input { flex: 1; min-width: 0; width: 0; height: 16px; padding-left: 3px; }
.chev { width: 17px; height: 16px; display: flex; align-items: center; justify-content: center; color: #4d6185; background: linear-gradient(135deg, #e6effc, #b3cbf0); border: 1px solid #9db5dc; }
.chev svg { width: 10px; height: 8px; }
.tree { flex: 1; min-height: 0; background: #fff; border: 1px solid #8b9ab0; border-right-width: 2px; border-bottom-width: 2px; overflow: hidden; }
.tree li { display: flex; align-items: center; height: 18px; padding-left: 6px; }
.tree .root { padding-left: 1px; }
.lay { width: 18px; height: 16px; margin-right: 1px; }
.dark { background: #bbb; }
.plus { width: 9px; height: 9px; margin-right: 6px; border: 1px solid #7a8ba5; background: linear-gradient(#000, #000) center / 5px 1px no-repeat, linear-gradient(#000, #000) center / 1px 5px no-repeat, #f4f4f4; flex: none; }
.grip { width: 12px; flex: none; background: #ebe9ed; padding: 166px 0 0 4px; display: flex; flex-direction: column; gap: 105px; }
.hatch { width: 6px; height: 105px; flex: none; background: repeating-conic-gradient(#aaa 0 25%, #ebe9ed 0 50%) 0 0 / 2px 2px; padding-top: 43px; }
.hatch svg { width: 6px; height: 18px; stroke: #00c; stroke-width: 2; }
.sash { width: 6px; flex: none; background: #b9d2f4; border-left: 1px solid #6f95cc; border-right: 2px solid #4a6796; padding-top: 271px; }
.sash svg { width: 6px; height: 104px; }
.canvas { flex: 1; min-width: 0; position: relative; overflow: hidden; background: #33312d; }
.drawing { width: 1061px; height: 645px; }
.drawing text { stroke: none; white-space: pre; }
.dwg-text { fill: #ff0; font-size: 9px; }
.dwg-text .big { font: 15px "Liberation Mono", monospace; }
.dwg-text .tall { font: 17px "Liberation Mono", monospace; }
.dwg-note { fill: #aaa; font-size: 7px; }
.dwg-note .num { font: 9px "Liberation Mono", monospace; }
.dwg-note .tiny { font-size: 6px; }

.dialog { position: absolute; left: 241px; top: 303px; width: 594px; background: #ebe9ed; border: 3px solid #3568b8; border-top: 0; border-radius: 7px 7px 0 0; box-shadow: inset 0 0 0 1px #6b9ae0; }
.dialog header { display: flex; align-items: center; height: 30px; margin: 0 -3px; padding: 2px 6px 0 5px; background: linear-gradient(#2f62b0 0, #7bb8f2 3px, #5a9be6 14px, #3f7fd2 16px, #2a56b0 100%); border-radius: 7px 7px 0 0; color: #fff; }
.dialog header > svg { width: 16px; height: 14px; }
.dialog h1 { flex: 1; margin-left: 4px; font-size: 14px; font-weight: 700; line-height: 18px; text-shadow: 1px 1px #1a3c80; }
.close { width: 19px; height: 19px; border: 1px solid #f3d7cf; border-radius: 3px; background: linear-gradient(#f0a890, #d8512c 50%, #c8432a); }
.close svg { width: 17px; height: 17px; }
.body { display: flex; padding: 1px 6px 0 5px; align-items: flex-start; }
.symbols { display: grid; grid-template-columns: 42px 42px; gap: 2px; padding-top: 4px; }
.symbols button { height: 26px; display: flex; align-items: center; justify-content: center; border: 1px solid #5b84c0; border-radius: 2px; background: linear-gradient(#fff, #e2ebf7 45%, #a5c1e5); box-shadow: inset 0 0 0 1px #b7cbe8; }
.symbols svg { width: 36px; height: 22px; stroke: #000; stroke-width: 2; }
.symbols .sel { background: #fff; border-color: #ddd; box-shadow: none; }
.notebook { flex: 1; margin: 3px 7px 0 5px; }
.dtabs { display: flex; gap: 1px; height: 22px; align-items: flex-end; }
.dtabs button { height: 20px; padding: 0 4px; border: 1px solid #9db0cc; border-bottom: 0; border-radius: 3px 3px 0 0; background: linear-gradient(#fff, #b9cfee); line-height: 18px; }
.dtabs .active { height: 22px; padding: 0 6px 2px; border-top: 2px solid #f5a623; background: #fff; }
.page { border: 1px solid #8c98ac; }
.model { display: grid; grid-template-columns: 26px 1fr; padding: 18px 0 3px 3px; row-gap: 5px; align-items: center; border-bottom: 1px solid #9aa1b0; }
.model .btn { grid-column: 2; width: 80px; }
.halves { display: grid; grid-template-columns: 192px 1fr; border-top: 1px solid #fff; }
.half { display: grid; grid-template-columns: 37px 1fr; align-items: center; align-content: start; height: 107px; padding: 17px 2px 0 6px; }
.half.left { padding-left: 3px; border-right: 1px solid #9aa1b0; }
.half > span { height: 24px; }
.half .btn { grid-column: 2; width: 80px; margin-top: 10px; }
.half .wide { width: 104px; }
.half select { height: 14px; line-height: 14px; }
.blue select { color: #fff; background: #2f5bab; outline: 1px dotted #111; margin-left: 2px; padding-left: 2px; }
.combo.off { background: #d8d6da; border-color: #c5c3b8; }
.off select { color: #aaa; opacity: 1; }
.off .chev { color: #b5bccb; background: #e6effb; border-color: #d5e2f5; }
.actions { width: 74px; display: flex; flex-direction: column; gap: 2px; align-self: stretch; }
.actions .new { margin-top: 13px; }
.actions .last { margin-top: auto; }
.dialog footer { padding: 6px 8px 4px; line-height: 16px; white-space: nowrap; }

.messages { flex: none; position: relative; height: 96px; background: #d6d5da; border-top: 3px solid #ebe9ed; border-bottom: 1px solid #a5a4a9; padding: 9px 0 0 3px; }
.messages li, .copy p { display: flex; align-items: center; height: 16px; white-space: nowrap; }
.messages svg { width: 12px; height: 12px; }
.blank { position: absolute; left: 0; top: 73px; width: 189px; height: 37px; background: #fff; z-index: 1; }
.copy { position: absolute; left: 492px; top: 51px; width: 189px; }
.copy p { padding-left: 3px; }
.copy div { height: 17px; margin-top: 4px; background: #ebe9ed; border-top: 1px solid #aaa; }
.status { flex: none; display: flex; justify-content: flex-end; align-items: center; height: 23px; background: #ebe9ed; border-top: 1px solid #fff; }
.status .cell { width: 94px; height: 22px; border-left: 1px solid #999; background: linear-gradient(#d2cfc6, #d2cfc6) 2px 0 no-repeat; }
.status .field { width: 126px; height: 18px; margin-left: 3px; background: #fff; border: 1px solid #999; border-right: 0; }

.taskbar { flex: none; display: flex; align-items: center; height: 30px; color: #fff; background: linear-gradient(#1d3f93 0, #86bdf2 2px, #5f9fe6 15px, #3a78cf 16px, #2b52ad 100%); }
.start { display: flex; align-items: center; width: 97px; height: 28px; padding-left: 9px; gap: 8px; font-size: 19px; font-style: italic; font-weight: 300; line-height: 24px; text-shadow: 1px 1px #1c5c1c; background: linear-gradient(#71c268, #3b9f35 40%, #2b8a26 80%, #1e701c); border-radius: 0 10px 10px 0; }
.start svg { width: 20px; height: 18px; }
.quick { display: flex; align-items: center; gap: 6px; width: 104px; padding-left: 10px; }
.quick svg { width: 18px; height: 18px; }
.more { font-size: 16px; margin: -10px 0 0 4px; }
.task { display: flex; align-items: center; gap: 4px; width: 156px; height: 24px; padding-left: 8px; margin-right: 4px; border-radius: 2px; border: 1px solid #2f62b8; background: linear-gradient(#7db4ee, #4c8fdd 50%, #3470c6); }
.task svg { width: 16px; height: 14px; }
.task b { font: 12px/14px "Noto Sans CJK SC", sans-serif; }
.task.current { width: 159px; background: linear-gradient(#173a80, #23509f); border-color: #102c66; }
.kbd { margin: 2px 58px 0 auto; }
.kbd svg { width: 18px; height: 14px; }
.tray { display: flex; align-items: center; gap: 2px; width: 74px; height: 29px; padding-left: 10px; overflow: hidden; background: linear-gradient(#c5defa, #a5c9f4 60%, #6d9be0); }
.tray svg { width: 16px; height: 16px; }

.ink { position: absolute; left: 0; top: 0; width: 1440px; height: 900px; pointer-events: none; z-index: 5; }
.black { stroke: #000; }
.red { stroke: #e8101c; }
.dot { fill: #e8101c; stroke: none; }
```
